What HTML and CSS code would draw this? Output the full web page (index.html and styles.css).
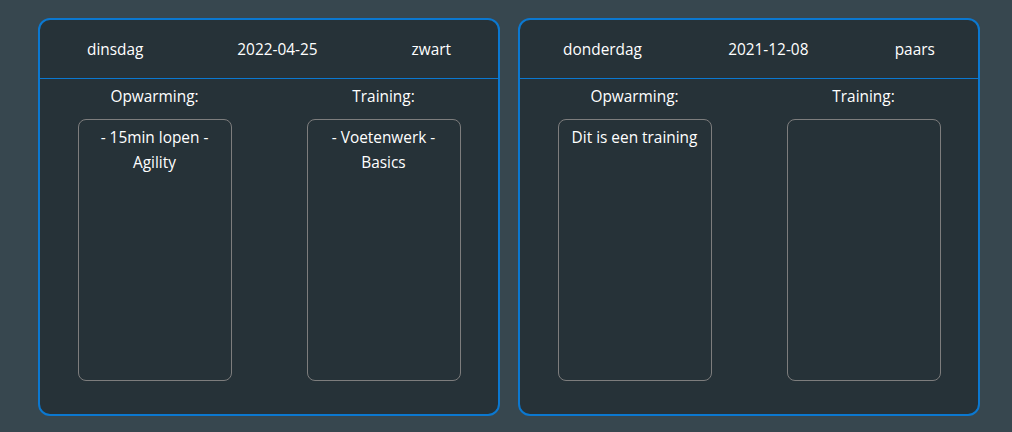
FILE: index.html
```html
<!DOCTYPE html>
<html lang="nl">
<head>
<meta charset="utf-8">
<title>Trainingen</title>
<link rel="stylesheet" href="styles.css">
</head>
<body>
<main class="list">
  <section class="card">
    <header class="card-head">
      <span>dinsdag</span>
      <span>2022-04-25</span>
      <span>zwart</span>
    </header>
    <div class="card-body">
      <div class="col">
        <div class="label">Opwarming:</div>
        <div class="box">- 15min lopen - Agility</div>
      </div>
      <div class="col">
        <div class="label">Training:</div>
        <div class="box">- Voetenwerk - Basics</div>
      </div>
    </div>
  </section>
  <section class="card">
    <header class="card-head">
      <span>donderdag</span>
      <span>2021-12-08</span>
      <span>paars</span>
    </header>
    <div class="card-body">
      <div class="col">
        <div class="label">Opwarming:</div>
        <div class="box">Dit is een training</div>
      </div>
      <div class="col">
        <div class="label">Training:</div>
        <div class="box"></div>
      </div>
    </div>
  </section>
</main>
</body>
</html>
```
FILE: styles.css
```css
html, body {
  margin: 0;
  padding: 0;
}
body {
  background: #37474f;
  color: #ffffff;
  font-family: "Open Sans", "Noto Sans", sans-serif;
  font-size: 15.4px;
  width: 1012px;
  height: 432px;
  overflow: hidden;
}
.list {
  display: flex;
  gap: 18px;
  padding: 18px 0 0 38px;
}
.card {
  box-sizing: border-box;
  width: 462px;
  height: 398px;
  background: #263238;
  border: 2px solid #0b78d0;
  border-radius: 12px;
  display: flex;
  flex-direction: column;
}
.card-head {
  height: 59px;
  box-sizing: border-box;
  border-bottom: 1px solid #0b78d0;
  display: flex;
  justify-content: space-around;
  align-items: center;
  padding-top: 1px;
}
.card-body {
  display: grid;
  grid-template-columns: 1fr 1fr;
}
.col {
  display: flex;
  flex-direction: column;
  align-items: center;
}
.label {
  margin-top: 7px;
  line-height: 22px;
}
.box {
  box-sizing: border-box;
  margin-top: 11px;
  width: 154px;
  height: 262px;
  border: 1px solid #7d7d7d;
  border-radius: 8px;
  padding: 5px 6px 4px;
  text-align: center;
  line-height: 25px;
}
```
